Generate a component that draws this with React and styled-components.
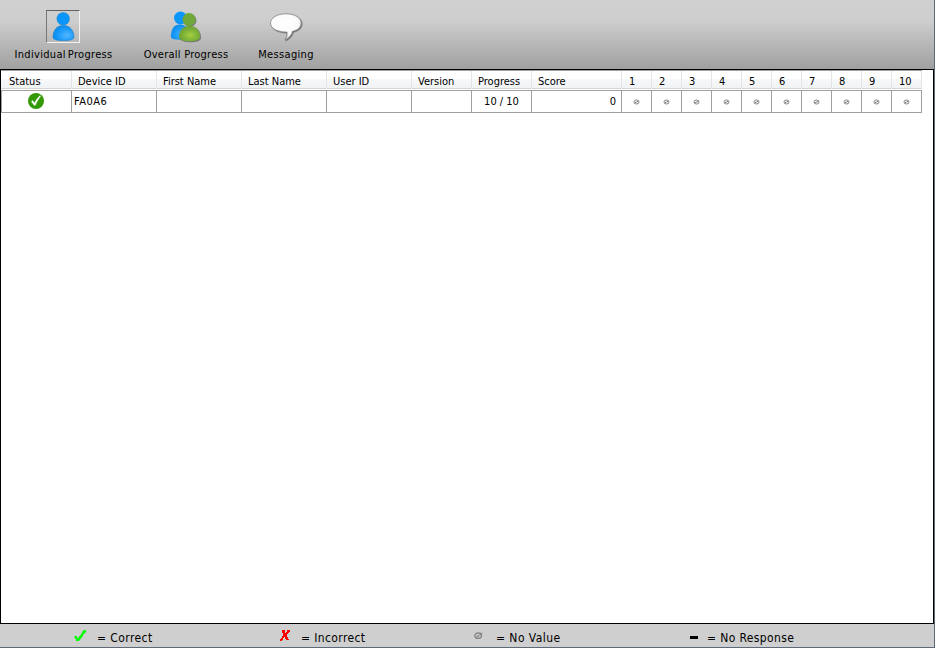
import React from "react";
import styled, { createGlobalStyle } from "styled-components";

const GlobalStyle = createGlobalStyle`
  * { box-sizing: border-box; }
  body { margin: 0; background: #cfcfcf; }
`;

const Window = styled.div`
  width: 935px;
  height: 648px;
  display: flex;
  flex-direction: column;
  overflow: hidden;
  border-right: 1px solid #5d6878;
  border-bottom: 1px solid #5d6878;
  background: #cfcfcf;
  color: #000;
  font-family: "DejaVu Sans Condensed", "DejaVu Sans", Tahoma, sans-serif;
  font-stretch: condensed;
  font-size: 11px;
  line-height: 14px;
  white-space: nowrap;
`;

const Toolbar = styled.nav`
  height: 69px;
  flex: none;
  display: flex;
  align-items: flex-start;
  padding: 10px 0 0 14px;
  background: linear-gradient(#d0d0d0 0, #cecece 20px, #a0a0a0 69px);
`;

const ToolButton = styled.button`
  width: ${(p) => p.$width}px;
  margin-right: ${(p) => p.$gap || 0}px;
  padding: 0;
  border: 0;
  background: none;
  font: inherit;
  color: inherit;
  display: flex;
  flex-direction: column;
  align-items: center;
  gap: 5px;
`;

const IconFrame = styled.span`
  width: 34px;
  height: 33px;
  display: block;
  border: 1px solid transparent;
  ${(p) => p.$active && "margin-right: 1px; border-color: #626262 #f2f2f2 #f2f2f2 #777;"}
  svg { display: block; overflow: visible; }
`;

const Label = styled.span`
  letter-spacing: ${(p) => p.$track || 0}px;
  word-spacing: ${(p) => p.$word || 0}px;
`;

const Content = styled.main`
  flex: 1;
  min-height: 0;
  border: 1px solid #000;
  background: #fff;
`;

const Grid = styled.div`
  display: grid;
  grid-template-columns: 71px repeat(4, 85px) 60px 60px 90px repeat(10, 30px);
  width: 921px;
`;

const HeadCell = styled.div`
  height: 20px;
  padding: 4px 0 0 ${(p) => p.$pad}px;
  border-top: 1px solid #a0a0a0;
  border-bottom: 1px solid #fff;
  background:
    linear-gradient(#e4e5e7, #e4e5e7) right / 1px 100% no-repeat,
    linear-gradient(#d5d5d5, #d5d5d5) bottom / 100% 1px no-repeat,
    linear-gradient(#fff 0 45%, #f7f8fa 46%, #f1f2f4 100%);
`;

const Cell = styled.div`
  height: 23px;
  display: flex;
  align-items: center;
  justify-content: ${(p) => p.$align || "center"};
  padding: 0 ${(p) => (p.$align === "flex-end" ? 5 : 0)}px 0
    ${(p) => (p.$align === "flex-start" ? 2 : 0)}px;
  border: solid #a0a0a0;
  border-width: 1px 1px 1px 0;
  &:nth-of-type(18n + 1) { border-left-width: 1px; }
`;

const Footer = styled.footer`
  height: 23px;
  flex: none;
  display: flex;
  padding-left: 74px;
  font-size: 12px;
  line-height: 28px;
`;

const LegendItem = styled.div`
  width: ${(p) => p.$width}px;
  display: flex;
`;

const LegendIcon = styled.span`
  width: ${(p) => p.$width}px;
  flex: none;
  svg { display: block; margin-top: ${(p) => p.$top}px; }
`;

const Defs = () => (
  <defs>
    <radialGradient id="blue" cx=".65" cy=".65" r=".7">
      <stop offset="0" stopColor="#52b6ff" />
      <stop offset=".55" stopColor="#1e9cfb" />
      <stop offset="1" stopColor="#078cec" />
    </radialGradient>
    <radialGradient id="green" cx=".55" cy=".6" r=".65">
      <stop offset="0" stopColor="#a5cf3e" />
      <stop offset=".5" stopColor="#80b539" />
      <stop offset="1" stopColor="#659b35" />
    </radialGradient>
    <radialGradient id="bubble" cx=".45" cy=".35" r=".65">
      <stop offset="0" stopColor="#fff" />
      <stop offset=".7" stopColor="#fafafa" />
      <stop offset="1" stopColor="#c9c9c9" />
    </radialGradient>
    <filter id="shadow" x="-20%" y="-20%" width="150%" height="150%">
      <feDropShadow dx=".8" dy=".8" stdDeviation=".6" floodColor="#333" floodOpacity=".65" />
    </filter>
  </defs>
);

const PersonIcon = () => (
  <svg width="32" height="31" viewBox="0 0 32 31">
    <Defs />
    <path d="M6 26.5C6 19 10 14.5 16.3 14.5S27 19 27 26.5C26 29 22 29.5 16.5 29.5S6.500 29 6 26.500Z" fill="url(#blue)" stroke="#147cc9" strokeWidth=".6" />
    <circle cx="16.200" cy="7.800" r="6.300" fill="#0995fb" stroke="#2388c9" strokeWidth=".6" />
  </svg>
);

const PeopleIcon = () => (
  <svg width="32" height="31" viewBox="0 0 32 31">
    <path d="M.8 26C1 18 4 13.500 10 13.500S19 18 19 27Q12 30 2.500 28Z" fill="url(#blue)" />
    <circle cx="10.500" cy="7" r="6.500" fill="#0b96fc" />
    <g filter="url(#shadow)">
      <path d="M9 26.500C9 19 13 15 19.500 15S30 19 30 26.500C29 29.500 25 30.200 19.500 30.200S10 29 9 26.500Z" fill="url(#green)" />
      <circle cx="19" cy="8.500" r="6.500" fill="#6fa83b" />
    </g>
  </svg>
);

const BubbleIcon = () => (
  <svg width="32" height="31" viewBox="0 0 32 31">
    <path filter="url(#shadow)" d="M16 2.800C7 2.800.5 7 .5 12C.5 17 6 20.500 15 21L17 21Q18 25 15 29Q21.500 26 22.500 20.300C28.500 19 31.200 16 31.200 12C31.200 7 25 2.800 16 2.800Z" fill="url(#bubble)" stroke="#777" strokeWidth=".7" />
  </svg>
);

const StatusIcon = () => (
  <svg width="17" height="17" viewBox="0 0 17 17">
    <circle cx="8" cy="8" r="8" fill="#339a06" />
    <path d="M3.300 8.500L4.700 7.500L6.500 10Q8.500 5.500 12 2.500L12.500 3.500Q9.300 7.500 7.300 12.300L6.300 12.500Z" fill="#fff" stroke="#fff" strokeWidth=".3" />
  </svg>
);

const NoValueIcon = () => (
  <svg width="7" height="6" viewBox="0 0 7 6" fill="none" stroke="#777" strokeWidth=".9">
    <ellipse cx="3.500" cy="3" rx="2.500" ry="2" />
    <path d="M2 3.800L5.200 2.200" />
  </svg>
);

const CheckIcon = () => (
  <svg width="13" height="13" viewBox="0 0 13 13">
    <path d="M.5 7H3V9H4L8 4V3L10 1H12V3L9 6V7L5 12H2V10L.5 9Z" fill="#00fa00" />
  </svg>
);

const CrossIcon = () => (
  <svg width="11" height="12" viewBox="0 0 11 12" shapeRendering="crispEdges">
    <path d="M3 1H6V4H7V3H8V1H11V3H10V4H9V5H8V8H9V10H10V11H7V10H6V8H5V9H4V11H3V12H1V10H2V9H3V7H4V4H3Z" fill="#f00" />
  </svg>
);

const LegendNoValueIcon = () => (
  <svg width="9" height="8" viewBox="0 0 9 8" fill="none" stroke="#858585" strokeWidth="1.400">
    <ellipse cx="4.200" cy="3.700" rx="3.300" ry="2.700" />
    <path d="M2 5.700L8.300 1M4 5V3" strokeWidth="1" />
  </svg>
);

const DashIcon = () => (
  <svg width="9" height="3" viewBox="0 0 9 3"><path d="M0 0H8V3H0Z" /></svg>
);

const columns = [
  ["Status", 8], ["Device ID", 6], ["First Name", 6], ["Last Name", 6],
  ["User ID", 6], ["Version", 6], ["Progress", 6], ["Score", 6],
  ...Array.from({ length: 10 }, (_, i) => [String(i + 1), 7]),
];

export default function App() {
  return (
    <Window>
      <GlobalStyle />
      <Toolbar>
        <ToolButton $width={99} $gap={30}>
          <IconFrame $active><PersonIcon /></IconFrame>
          <Label $track={0.32} $word={-1.5}>Individual Progress</Label>
        </ToolButton>
        <ToolButton $width={86} $gap={29}>
          <IconFrame><PeopleIcon /></IconFrame>
          <Label $track={0.25}>Overall Progress</Label>
        </ToolButton>
        <ToolButton $width={56}>
          <IconFrame><BubbleIcon /></IconFrame>
          <Label $track={0.35}>Messaging</Label>
        </ToolButton>
      </Toolbar>
      <Content>
        <Grid>
          {columns.map(([name, pad]) => (
            <HeadCell key={name} $pad={pad}><Label>{name}</Label></HeadCell>
          ))}
        </Grid>
        <Grid>
          <Cell><StatusIcon /></Cell>
          <Cell $align="flex-start"><Label $track={0.5}>FA0A6</Label></Cell>
          <Cell /><Cell /><Cell /><Cell />
          <Cell>10 / 10</Cell>
          <Cell $align="flex-end">0</Cell>
          {columns.slice(8).map(([name]) => (
            <Cell key={name}><NoValueIcon /></Cell>
          ))}
        </Grid>
      </Content>
      <Footer>
        <LegendItem $width={205}>
          <LegendIcon $width={23} $top={5}><CheckIcon /></LegendIcon>
          <Label $track={0.42}>= Correct</Label>
        </LegendItem>
        <LegendItem $width={195}>
          <LegendIcon $width={22} $top={5}><CrossIcon /></LegendIcon>
          <Label $track={0.38}>= Incorrect</Label>
        </LegendItem>
        <LegendItem $width={216}>
          <LegendIcon $width={22} $top={8}><LegendNoValueIcon /></LegendIcon>
          <Label $track={0.45}>= No Value</Label>
        </LegendItem>
        <LegendItem $width={120}>
          <LegendIcon $width={17} $top={12}><DashIcon /></LegendIcon>
          <Label $track={0.37}>= No Response</Label>
        </LegendItem>
      </Footer>
    </Window>
  );
}
